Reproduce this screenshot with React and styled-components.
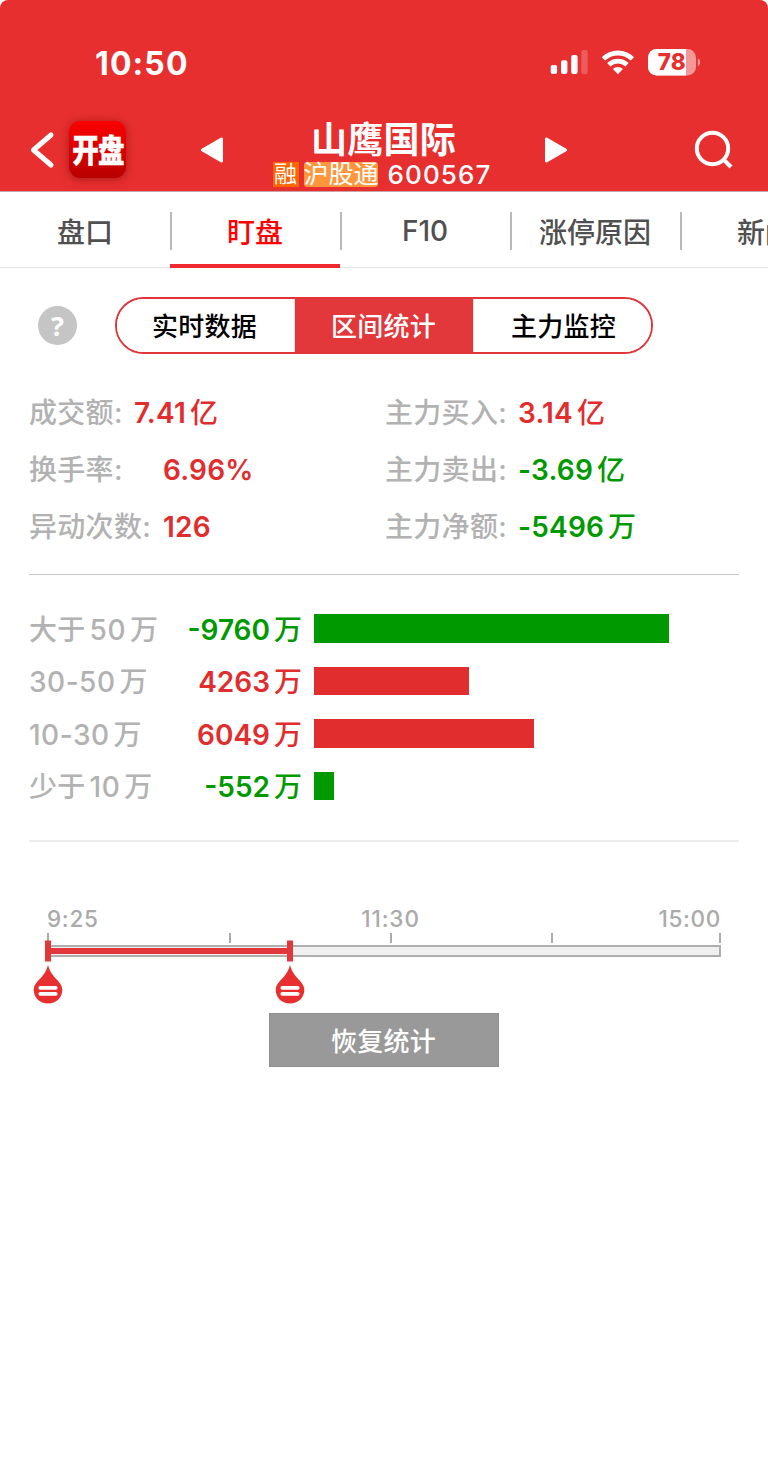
import React, { useState } from "react";
import styled, { createGlobalStyle } from "styled-components";

const GlobalStyle = createGlobalStyle`
  * {
    box-sizing: border-box;
  }

  body {
    margin: 0;
    background: #fff;
    font-family: Inter, "Noto Sans CJK SC", sans-serif;
    overflow-x: hidden;
  }

  button {
    font-family: inherit;
    cursor: pointer;
  }
`;

const Page = styled.div`
  width: 768px;
  height: 1473px;
  background: #fff;
  overflow: hidden;
`;

const Header = styled.header`
  height: 192px;
  background: #e72f2f;
  border-bottom: 1px solid #c9a5a5;
  border-radius: 8px 8px 0 0;
`;

const StatusBar = styled.div`
  display: flex;
  align-items: center;
  height: 116px;
  padding: 10px 68px 0 95px;
`;

const Clock = styled.span`
  margin: 1px auto 0 0;
  color: #fff;
  font-size: 32px;
  font-weight: 700;
  line-height: 40px;
  letter-spacing: 1.1px;
`;

const StatusIcons = styled.svg`
  display: block;
`;

const NavBar = styled.div`
  display: flex;
  align-items: center;
  height: 75px;
  padding: 0 34px 0 29px;
`;

const BackIcon = styled.svg`
  margin-top: -7px;
`;

const AppIcon = styled.div`
  display: flex;
  align-items: center;
  justify-content: center;
  width: 57px;
  height: 57px;
  margin: -8px 0 0 14px;
  padding-bottom: 4px;
  border-radius: 11px;
  background: linear-gradient(#fb0000, #b80000);
  box-shadow: 0 1px 8px rgba(110, 0, 0, 0.5);
`;

const AppName = styled.span`
  color: #fff;
  font-size: 32px;
  font-weight: 900;
  letter-spacing: -1px;
  white-space: nowrap;
  transform: scaleX(0.83);
  -webkit-text-stroke: 0.4px #fff;
`;

const Arrow = styled.svg`
  margin: -8px 0 0 ${(props) => props.$gap}px;
`;

const Stock = styled.div`
  display: flex;
  flex-direction: column;
  align-items: center;
  width: 240px;
  margin-left: 39px;
`;

const StockName = styled.h1`
  margin: 0 0 -1px 3px;
  color: #fff;
  font-size: 36px;
  font-weight: 700;
  line-height: 42px;
  letter-spacing: 0.2px;
`;

const StockMeta = styled.div`
  display: flex;
  align-items: center;
  height: 28px;
  color: #fff;
`;

const Tag = styled.span`
  width: ${(props) => props.$width}px;
  height: 25px;
  margin-right: ${(props) => props.$gap}px;
  border-radius: ${(props) => props.$radius}px;
  background: ${(props) => props.$bg};
  font-size: ${(props) => props.$size}px;
  line-height: 25px;
  text-align: center;
  white-space: nowrap;
`;

const StockCode = styled.span`
  font-size: 26px;
  font-weight: 500;
  letter-spacing: 1.1px;
`;

const SearchIcon = styled.svg`
  margin: -7px 0 0 auto;
`;

const Tabs = styled.nav`
  display: flex;
  width: 850px;
  height: 76px;
  border-bottom: 1px solid #e6e6e6;
`;

const Tab = styled.button`
  position: relative;
  width: 170px;
  height: 76px;
  padding: 6px 0 0;
  border: none;
  border-bottom: 4px solid ${(props) => (props.$active ? "#ee2a2e" : "transparent")};
  background: none;
  color: ${(props) => (props.$active ? "#ff0000" : "#505050")};
  font-size: 28px;
  font-weight: 500;
  white-space: nowrap;

  /* separator on the left edge */
  &:not(:first-child)::before {
    content: "";
    position: absolute;
    left: 0;
    top: 20px;
    width: 2px;
    height: 38px;
    background: #b9b9b9;
  }
`;

const Switcher = styled.div`
  display: flex;
  align-items: center;
  padding: 29px 0 0 38px;
`;

const Help = styled.span`
  width: 39px;
  height: 39px;
  margin-right: 38px;
  border-radius: 50%;
  background: #c5c5c5;
  color: #fff;
  font-family: "Noto Sans", sans-serif;
  font-size: 27px;
  font-weight: 700;
  line-height: 39px;
  text-align: center;
`;

const Segments = styled.div`
  display: grid;
  grid-template-columns: 178px 178px 178px;
  width: 538px;
  height: 57px;
  border: 2px solid #e2353a;
  border-radius: 29px;
  overflow: hidden;
`;

const Segment = styled.button`
  padding: 0 1px 2px 0;
  border: none;
  background: ${(props) => (props.$active ? "#e2373b" : "#fff")};
  color: ${(props) => (props.$active ? "#fff" : "#000")};
  font-size: 26px;
  font-weight: 500;
  letter-spacing: 0.3px;

  &:first-child {
    padding-right: 2px;
    border-right: 1px solid #ddd;
  }

  &:last-child {
    padding-left: 3px;
    border-left: 1px solid #ddd;
  }
`;

const Stats = styled.section`
  display: grid;
  grid-template-columns: 356px 1fr;
  grid-auto-rows: 57.3px;
  margin: 0 29px;
  padding: 30px 0 18px;
  border-bottom: 1px solid #c8c8c8;
`;

const Stat = styled.div`
  display: flex;
  align-items: center;
`;

const Label = styled.span`
  color: #b2b2b2;
  font-size: 28px;
  font-weight: 500;
  line-height: 40px;
  letter-spacing: 0.3px;
  white-space: nowrap;
`;

const StatLabel = styled(Label)`
  min-width: ${(props) => props.$width}px;
`;

const Value = styled.span`
  color: ${(props) => (props.$down ? "#009900" : "#e12d2e")};
  font-size: 28px;
  font-weight: 600;
  line-height: 40px;
  letter-spacing: 0.2px;
  white-space: nowrap;
`;

const Unit = styled.span`
  margin-left: 4px;
  font-weight: 500;
  letter-spacing: 0;
`;

const Flows = styled.section`
  margin: 0 29px;
  padding: 27.5px 0;
  border-bottom: 2px solid #ececec;
`;

const FlowRow = styled.div`
  display: grid;
  grid-template-columns: 140px 133px 1fr;
  align-items: center;
  height: 52.5px;
`;

const FlowLabel = styled(Label)`
  display: flex;
  gap: 4px;
  padding-top: 2px;
`;

const Bounds = styled.span`
  letter-spacing: 0.5px;
`;

const FlowValue = styled(Value)`
  padding-top: 2px;
  letter-spacing: 0;
  text-align: right;
`;

const FlowBar = styled.div`
  height: 28.5px;
  margin-left: 12px;
  background: ${(props) => (props.$down ? "#009900" : "#e12d2e")};
`;

const Timeline = styled.section`
  margin: 63px 47px 0;
`;

const TimeLabels = styled.div`
  display: grid;
  grid-template-columns: 1fr auto 1fr;
  color: #aaa;
  font-size: 22.5px;
  font-weight: 500;
  letter-spacing: 0.7px;
  line-height: 28px;
`;

const TimeLabel = styled.span`
  &:nth-child(2) {
    padding-left: 13px;
    letter-spacing: 0.9px;
  }

  &:last-child {
    text-align: right;
  }
`;

const Ruler = styled.div`
  position: relative;
  height: 12px;
`;

const Tick = styled.i`
  position: absolute;
  bottom: 2px;
  width: 2px;
  height: 10px;
  background: #aaa;
`;

const Track = styled.div`
  position: relative;
  height: 12px;
  border: 2px solid #afafaf;
  background: #f0f0f0;
`;

const Range = styled.div`
  height: 6px;
  margin: 1px 0;
  background: #e2373b;
`;

const Thumb = styled.svg`
  position: absolute;
  top: -7px;
  margin-left: -16px;
`;

const Reset = styled.button`
  display: block;
  width: 230px;
  height: 54px;
  margin: 56px auto 0;
  padding: 0 1px 1px 0;
  border: 1px solid #909090;
  background: #999;
  color: #fff;
  font-size: 26px;
  font-weight: 500;
  letter-spacing: 0.3px;
`;

const TABS = ["盘口", "盯盘", "F10", "涨停原因", "新闻"];

const SEGMENTS = ["实时数据", "区间统计", "主力监控"];

const STATS = [
  { label: "成交额:", value: "7.41", unit: "亿", width: 105 },
  { label: "主力买入:", value: "3.14", unit: "亿", width: 133 },
  { label: "换手率:", value: "6.96%", width: 134 },
  { label: "主力卖出:", value: "-3.69", unit: "亿", width: 133, down: true },
  { label: "异动次数:", value: "126", width: 134 },
  { label: "主力净额:", value: "-5496", unit: "万", width: 133, down: true },
];

const FLOWS = [
  { prefix: "大于", bounds: "50", amount: -9760 },
  { bounds: "30-50", amount: 4263 },
  { bounds: "10-30", amount: 6049 },
  { prefix: "少于", bounds: "10", amount: -552 },
];

const MAX_BAR = 355;
const maxAmount = Math.max(...FLOWS.map((flow) => Math.abs(flow.amount)));

const TICKS = [0, 181.5, 342.5, 504, 672];

const StatusIcon = () => (
  <StatusIcons width="150" height="30" viewBox="550 48 150 30" fill="#fff">
    <rect x="550.7" y="65" width="6.4" height="9" rx="2" />
    <rect x="561" y="60.3" width="6.4" height="13.7" rx="2" />
    <rect x="571.2" y="55" width="6.4" height="19" rx="2" />
    <rect x="581.3" y="50" width="6.4" height="24" rx="2" opacity="0.22" />
    <g fill="none" stroke="#fff" strokeWidth="4.8">
      <path d="M603.4 58.9a20.8 20.8 0 0 1 29 0" />
      <path d="M608.8 64.8a13.2 13.2 0 0 1 18.2 0" />
    </g>
    <path d="M617.9 74.2l-5-5.2a7.2 7.2 0 0 1 10 0z" />
    <path
      d="M656.5 49H687.5a8.5 8.5 0 0 1 8.5 8.5V67a8.5 8.5 0 0 1-8.5 8.5H656.5a8.5 8.5 0 0 1-8.5-8.5V57.5a8.5 8.5 0 0 1 8.5-8.5z"
      opacity="0.5"
    />
    <path d="M686 49H656.5a8.5 8.5 0 0 0-8.5 8.5V67a8.5 8.5 0 0 0 8.5 8.5H686z" />
    <path d="M697.8 58.3q2.4 1.3 2.4 4t-2.4 4z" opacity="0.5" />
    <text x="671.7" y="70.3" fill="#e72f2f" fontSize="22.5" fontWeight="800" textAnchor="middle">
      78
    </text>
  </StatusIcons>
);

const Handle = ({ left }) => (
  <Thumb style={{ left }} width="32" height="64" viewBox="0 0 32 64">
    <path d="M13 0.5h6v21h-6z" fill="#e2373b" />
    <path
      d="M16 25C17 29 19 33 22 36.500C26 41 30.300 44.500 30.300 50C30.300 57.700 24 63.500 16 63.500S1.700 57.700 1.700 50C1.700 44.500 6 41 10 36.500C13 33 15 29 16 25z"
      fill="#e72f2f"
    />
    <rect x="6.500" y="46" width="19" height="3.700" rx="1.600" fill="#fff" />
    <rect x="6.500" y="52" width="19" height="3.700" rx="1.600" fill="#fff" />
  </Thumb>
);

const App = () => {
  const [tab, setTab] = useState(1);
  const [segment, setSegment] = useState(1);

  return (
    <Page>
      <GlobalStyle />
      <Header>
        <StatusBar>
          <Clock>10:50</Clock>
          <StatusIcon />
        </StatusBar>
        <NavBar>
          <BackIcon width="26" height="38" viewBox="0 0 26 38">
            <path
              d="M22 4L4.500 19 22 34"
              fill="none"
              stroke="#fff"
              strokeWidth="5"
              strokeLinecap="round"
              strokeLinejoin="round"
            />
          </BackIcon>
          <AppIcon>
            <AppName>开盘</AppName>
          </AppIcon>
          <Arrow $gap={75} width="22" height="26" viewBox="0 0 22 26">
            <path d="M20.500 2v22L1.500 13z" fill="#fff" stroke="#fff" strokeWidth="3" strokeLinejoin="round" />
          </Arrow>
          <Stock>
            <StockName>山鹰国际</StockName>
            <StockMeta>
              <Tag $width={26} $gap={5} $radius={0} $size={23} $bg="#ff6400">融</Tag>
              <Tag $width={74} $gap={10} $radius={3} $size={25} $bg="#ff963c">沪股通</Tag>
              <StockCode>600567</StockCode>
            </StockMeta>
          </Stock>
          <Arrow $gap={43} width="22" height="26" viewBox="0 0 22 26">
            <path d="M1.500 2v22L20.500 13z" fill="#fff" stroke="#fff" strokeWidth="3" strokeLinejoin="round" />
          </Arrow>
          <SearchIcon width="40" height="40" viewBox="0 0 40 40" fill="none" stroke="#fff" strokeWidth="4">
            <circle cx="18.500" cy="18.500" r="15.700" />
            <path d="M29 29l8 8" />
          </SearchIcon>
        </NavBar>
      </Header>

      <Tabs>
        {TABS.map((name, index) => (
          <Tab key={name} $active={tab === index} onClick={() => setTab(index)}>
            {name}
          </Tab>
        ))}
      </Tabs>

      <Switcher>
        <Help>?</Help>
        <Segments>
          {SEGMENTS.map((name, index) => (
            <Segment key={name} $active={segment === index} onClick={() => setSegment(index)}>
              {name}
            </Segment>
          ))}
        </Segments>
      </Switcher>

      <Stats>
        {STATS.map((stat) => (
          <Stat key={stat.label}>
            <StatLabel $width={stat.width}>{stat.label}</StatLabel>
            <Value $down={stat.down}>
              {stat.value}
              {stat.unit && <Unit>{stat.unit}</Unit>}
            </Value>
          </Stat>
        ))}
      </Stats>

      <Flows>
        {FLOWS.map(({ prefix, bounds, amount }) => (
          <FlowRow key={amount}>
            <FlowLabel>
              {prefix && <span>{prefix}</span>}
              <Bounds>{bounds}</Bounds>
              <span>万</span>
            </FlowLabel>
            <FlowValue $down={amount < 0}>
              {amount}
              <Unit>万</Unit>
            </FlowValue>
            <FlowBar
              $down={amount < 0}
              style={{ width: (Math.abs(amount) / maxAmount) * MAX_BAR }}
            />
          </FlowRow>
        ))}
      </Flows>

      <Timeline>
        <TimeLabels>
          <TimeLabel>9:25</TimeLabel>
          <TimeLabel>11:30</TimeLabel>
          <TimeLabel>15:00</TimeLabel>
        </TimeLabels>
        <Ruler>
          {TICKS.map((left) => (
            <Tick key={left} style={{ left }} />
          ))}
        </Ruler>
        <Track>
          <Range style={{ width: 242 }} />
          <Handle left={-1} />
          <Handle left={241} />
        </Track>
        <Reset>恢复统计</Reset>
      </Timeline>
    </Page>
  );
};

export default App;
